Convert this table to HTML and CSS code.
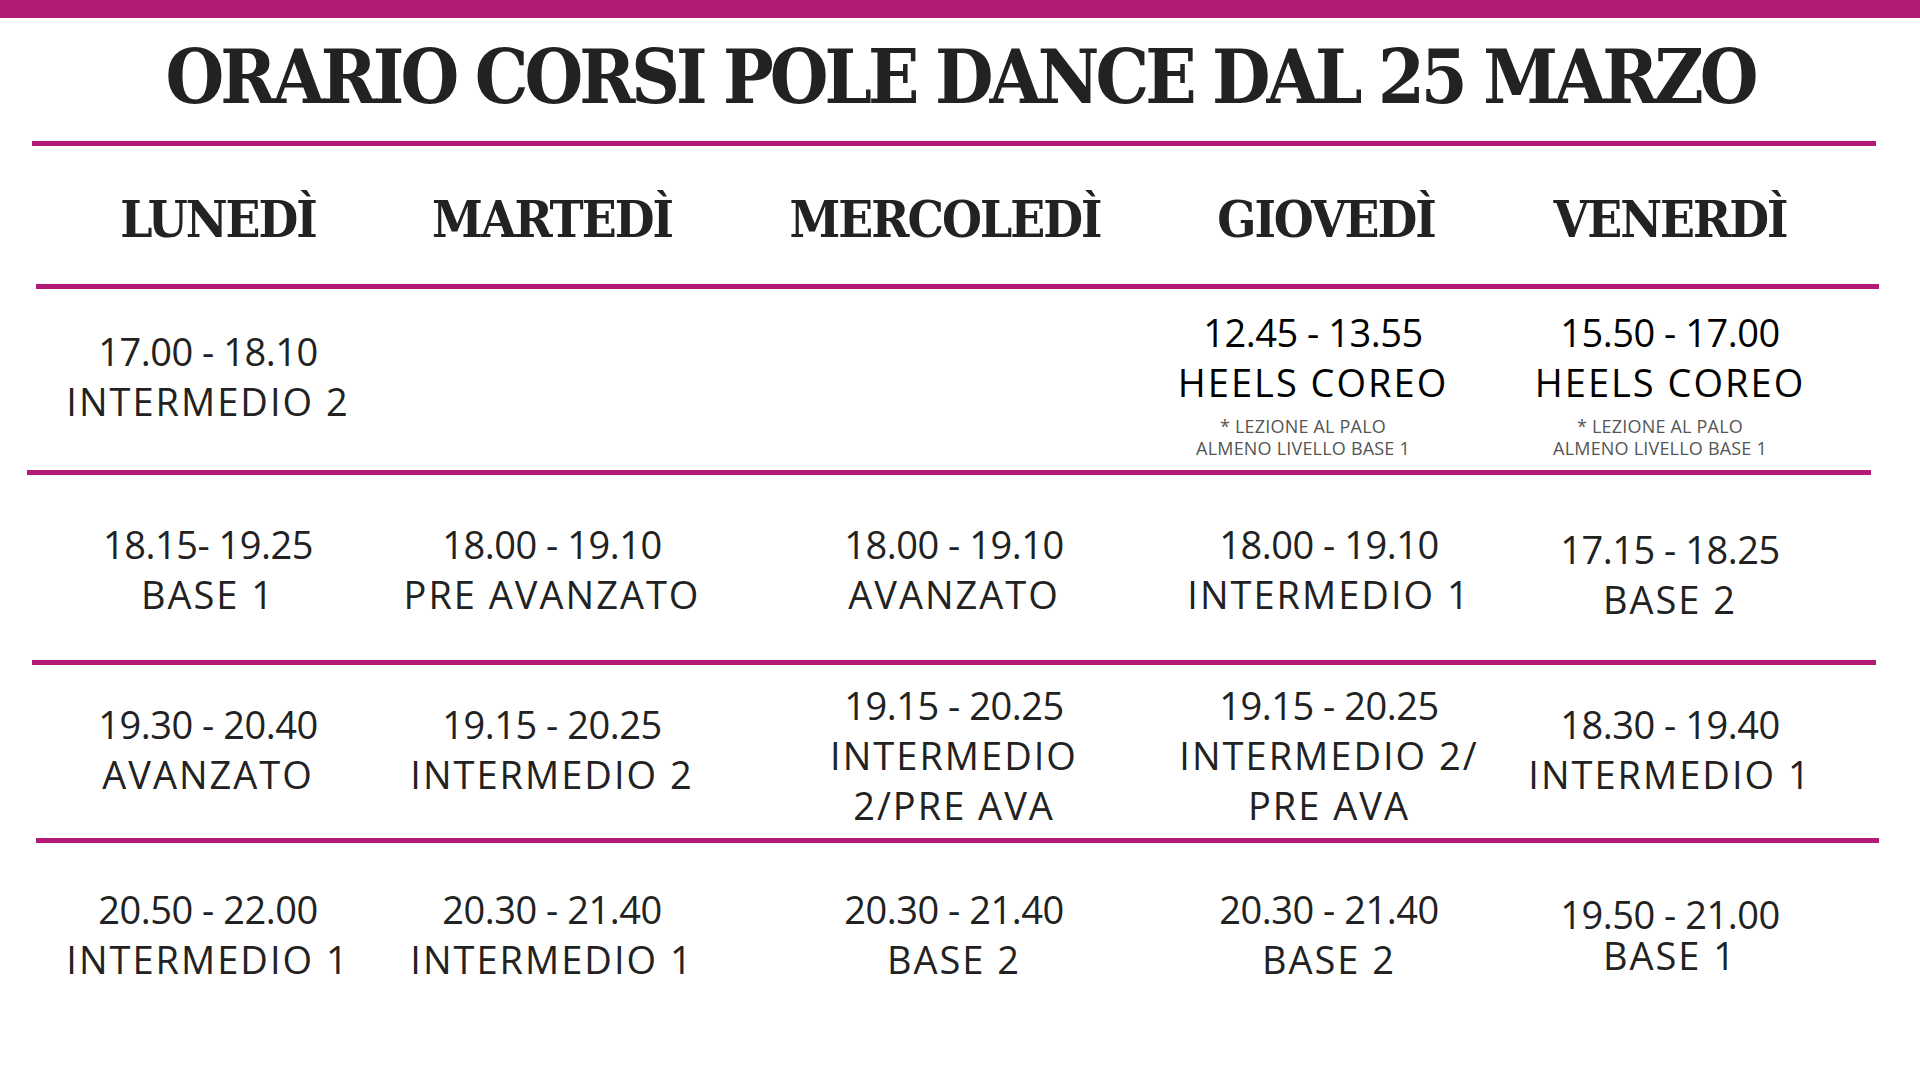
FILE: index.html
```html
<!DOCTYPE html>
<html lang="it">
<head>
<meta charset="utf-8">
<title>Orario corsi pole dance</title>
<link rel="stylesheet" href="styles.css">
</head>
<body>
<div class="topbar"></div>
<header class="title-wrap">
  <h1 class="title">ORARIO CORSI POLE DANCE DAL 25 MARZO</h1>
</header>
<div class="rule rule-a"></div>
<div class="grid days">
  <div class="day day-1">LUNEDÌ</div>
  <div class="day">MARTEDÌ</div>
  <div class="day day-3">MERCOLEDÌ</div>
  <div class="day day-4">GIOVEDÌ</div>
  <div class="day">VENERDÌ</div>
</div>
<div class="rule rule-b"></div>
<div class="grid row row-1">
  <div class="cell"><span class="t">17.00 - 18.10</span><span>INTERMEDIO 2</span></div>
  <div class="cell"></div>
  <div class="cell"></div>
  <div class="cell cell-heels cell-shift"><span class="t black">12.45 - 13.55</span><span class="black">HEELS COREO</span><span class="note">* LEZIONE AL PALO<br>ALMENO LIVELLO BASE 1</span></div>
  <div class="cell cell-heels"><span class="t black">15.50 - 17.00</span><span class="black">HEELS COREO</span><span class="note">* LEZIONE AL PALO<br>ALMENO LIVELLO BASE 1</span></div>
</div>
<div class="rule rule-c"></div>
<div class="grid row row-2">
  <div class="cell"><span class="t">18.15- 19.25</span><span>BASE 1</span></div>
  <div class="cell"><span class="t">18.00 - 19.10</span><span>PRE AVANZATO</span></div>
  <div class="cell"><span class="t">18.00 - 19.10</span><span>AVANZATO</span></div>
  <div class="cell"><span class="t">18.00 - 19.10</span><span>INTERMEDIO 1</span></div>
  <div class="cell cell-low"><span class="t">17.15 - 18.25</span><span>BASE 2</span></div>
</div>
<div class="rule rule-a"></div>
<div class="grid row row-3">
  <div class="cell"><span class="t">19.30 - 20.40</span><span>AVANZATO</span></div>
  <div class="cell"><span class="t">19.15 - 20.25</span><span>INTERMEDIO 2</span></div>
  <div class="cell cell-three"><span class="t">19.15 - 20.25</span><span>INTERMEDIO</span><span>2/PRE AVA</span></div>
  <div class="cell cell-three"><span class="t">19.15 - 20.25</span><span>INTERMEDIO 2/</span><span>PRE AVA</span></div>
  <div class="cell"><span class="t">18.30 - 19.40</span><span>INTERMEDIO 1</span></div>
</div>
<div class="rule rule-b"></div>
<div class="grid row row-4">
  <div class="cell"><span class="t">20.50 - 22.00</span><span>INTERMEDIO 1</span></div>
  <div class="cell"><span class="t">20.30 - 21.40</span><span>INTERMEDIO 1</span></div>
  <div class="cell"><span class="t">20.30 - 21.40</span><span>BASE 2</span></div>
  <div class="cell"><span class="t">20.30 - 21.40</span><span>BASE 2</span></div>
  <div class="cell cell-tight"><span class="t">19.50 - 21.00</span><span class="after-tight">BASE 1</span></div>
</div>
</body>
</html>
```

FILE: styles.css
```css
html, body {
  margin: 0;
  padding: 0;
  background: #ffffff;
}

body {
  width: 1920px;
  height: 1080px;
  overflow: hidden;
  font-family: "Open Sans", "DejaVu Sans", sans-serif;
  color: #222222;
}

.topbar {
  height: 18px;
  background: #b31a76;
}

.title-wrap {
  height: 123px;
  box-sizing: border-box;
  padding-top: 22px;
  display: flex;
  justify-content: center;
}

.title {
  margin: 0;
  font-family: "DejaVu Serif Condensed", "DejaVu Serif", serif;
  font-stretch: condensed;
  font-weight: bold;
  font-size: 75px;
  line-height: 75px;
  letter-spacing: -4px;
  color: #222222;
  white-space: nowrap;
}

.rule {
  height: 5px;
  background: #b31a76;
}

.rule-a {
  margin: 0 44px 0 32px;
}

.rule-b {
  margin: 0 41px 0 36px;
}

.rule-c {
  margin: 0 49px 0 27px;
}

.grid {
  display: grid;
  grid-template-columns: 344px 344px 460px 290px 392px;
  margin-left: 36px;
}

.days {
  height: 138px;
  box-sizing: border-box;
  padding-top: 48px;
}

.day {
  display: flex;
  justify-content: center;
  font-family: "DejaVu Serif Condensed", "DejaVu Serif", serif;
  font-stretch: condensed;
  font-weight: bold;
  font-size: 51px;
  line-height: 51px;
  letter-spacing: -2px;
  color: #222222;
  white-space: nowrap;
}

.day-1 {
  padding-left: 20px;
}

.day-3 {
  padding-right: 18px;
}

.day-4 {
  padding-right: 6px;
}

.row {
  box-sizing: border-box;
  align-items: start;
}

.cell {
  display: flex;
  flex-direction: column;
  align-items: center;
  font-size: 38px;
  line-height: 50px;
  letter-spacing: 2px;
  white-space: nowrap;
}

.cell .t {
  letter-spacing: -0.5px;
}

.black {
  color: #000000;
}

.note {
  margin-top: 8px;
  margin-right: 20px;
  font-size: 18px;
  line-height: 22px;
  letter-spacing: 0.2px;
  color: #555555;
  text-align: center;
}

.row-1 {
  height: 181px;
}

.row-1 .cell {
  padding-top: 37px;
}

.row-1 .cell-heels {
  padding-top: 18px;
}

.cell-shift {
  padding-right: 32px;
}

.row-2 {
  height: 185px;
}

.row-2 .cell {
  padding-top: 44px;
}

.row-2 .cell-low {
  padding-top: 49px;
}

.row-3 {
  height: 173px;
}

.row-3 .cell {
  padding-top: 34px;
}

.row-3 .cell-three {
  padding-top: 15px;
}

.row-4 {
  height: 237px;
}

.row-4 .cell {
  padding-top: 41px;
}

.row-4 .cell-tight {
  padding-top: 46px;
}

.after-tight {
  margin-top: -9px;
}
```
